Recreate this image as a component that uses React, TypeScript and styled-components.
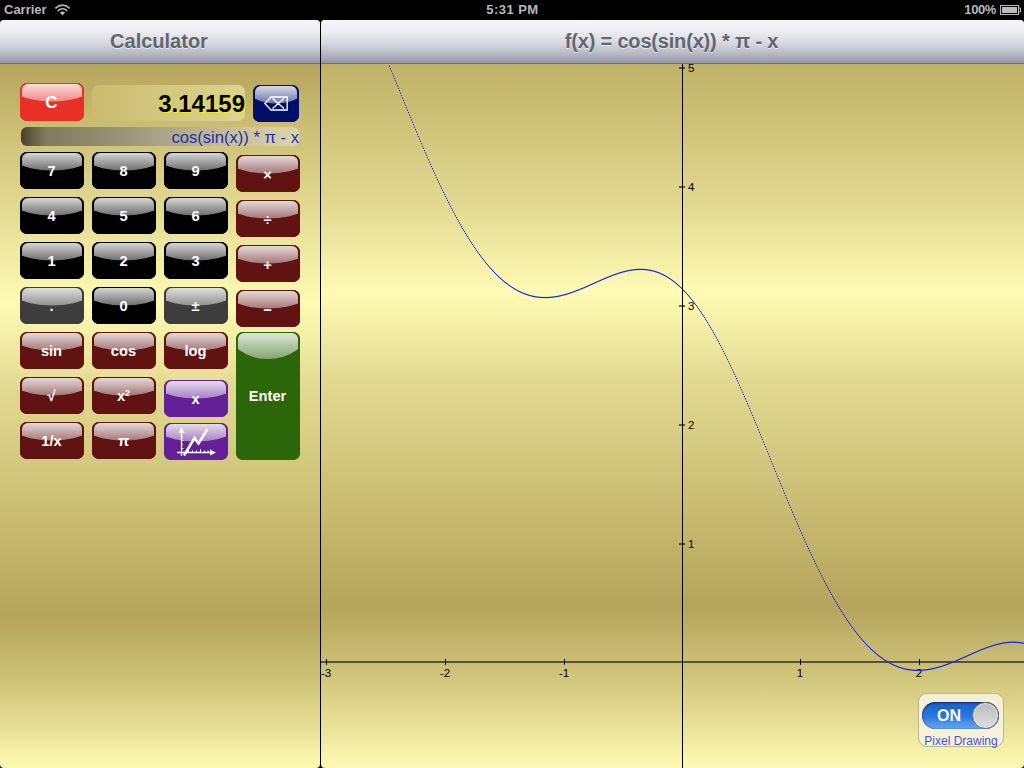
import React from 'react';
import styled, { createGlobalStyle, css } from 'styled-components';

const GlobalStyle = createGlobalStyle`
  * { box-sizing: border-box; }
  body {
    margin: 0;
    background: #000;
    font-family: 'Liberation Sans', Arial, Helvetica, sans-serif;
    overflow: hidden;
  }
`;

const Screen = styled.div`
  width: 1024px;
  height: 768px;
  display: flex;
  flex-direction: column;
  background: #000;
`;

const StatusBar = styled.header`
  height: 20px;
  display: grid;
  grid-template-columns: 1fr auto 1fr;
  align-items: center;
  padding: 0 3px 0 4px;
  color: #b8b8b8;
  font-size: 13px;
  font-weight: bold;
  line-height: 20px;
`;

const StatusGroup = styled.div<{ $end?: boolean }>`
  display: flex;
  align-items: center;
  justify-content: ${p => (p.$end ? 'flex-end' : 'flex-start')};
  gap: ${p => (p.$end ? '4px' : '7px')};
  letter-spacing: ${p => (p.$end ? '-0.4px' : '0')};
  svg { display: block; }
`;

const Clock = styled.div`
  font-size: 13px;
  letter-spacing: 0.45px;
`;

const SplitView = styled.main`
  flex: 1;
  display: flex;
  gap: 1px;
`;

const Pane = styled.section<{ $width: number; $backdrop: string }>`
  width: ${p => p.$width}px;
  height: 748px;
  display: flex;
  flex-direction: column;
  border-radius: 4px;
  overflow: hidden;
  background: ${p => p.$backdrop};
`;

const TitleBar = styled.h1<{ $spacing?: string }>`
  margin: 0;
  height: 44px;
  flex: none;
  border-bottom: 1px solid #6b7088;
  background: linear-gradient(#f6f6fa 0%, #eeeff2 25%, #d6d7de 55%, #b4b6c2 80%, #9a9cad 98%);
  color: #60676e;
  font-size: 20px;
  font-weight: bold;
  line-height: 43px;
  text-align: center;
  text-shadow: 0 1px 0 rgba(255, 255, 255, 0.55);
  letter-spacing: ${p => p.$spacing || '0'};
  padding-right: 2px;
`;

const CalculatorBody = styled.div`
  padding: 19px 20px 0;
  display: flex;
  flex-direction: column;
`;

const DisplayRow = styled.div`
  display: flex;
  gap: 8px;
  align-items: flex-start;
`;

const Display = styled.output`
  width: 153px;
  height: 36px;
  margin-top: 2px;
  border-radius: 7px;
  background: linear-gradient(90deg, #cabb6f, #ddd38f);
  color: #000;
  font-size: 24px;
  font-weight: bold;
  line-height: 38px;
  text-align: right;
  text-shadow: 1px 1px 0 #f2e800;
`;

const Expression = styled.div`
  width: 278px;
  height: 19px;
  margin: 5px 0 6px 1px;
  border-radius: 6px;
  background: linear-gradient(90deg, #45412b 0, #645f46 12px, #827c5e 26px, #8f896a 70px, #aaa488 140px, #c8c19d 215px, #dbd4ac 278px);
  color: #1f2fae;
  font-size: 16.6px;
  line-height: 21px;
  text-align: right;
  white-space: nowrap;
`;

const tones = {
  black: '#000000',
  gray: '#3d3d3d',
  maroon: '#601310',
  violet: '#642098',
  green: '#2b6608',
  red: '#e83026',
  navy: '#020f69',
};
type Tone = keyof typeof tones;

const Key = styled.button<{ $tone: Tone; $top?: number; $width?: number; $height?: number; $tall?: boolean; $drop?: number }>`
  position: relative;
  width: ${p => p.$width || 64}px;
  height: ${p => p.$height || 37}px;
  flex: none;
  margin: ${p => p.$top || 0}px 0 0;
  padding: ${p => p.$drop ?? 1}px 1px 0 0;
  display: flex;
  align-items: center;
  justify-content: center;
  border: 0;
  border-radius: 7px;
  background: ${p => tones[p.$tone]};
  box-shadow: 0 0 0.5px ${p => tones[p.$tone]};
  color: #fff;
  font: bold 14.7px/18px 'Liberation Sans', Arial, sans-serif;
  ${p => p.$tone === 'red' && css`font-size: 17px;`}

  &::before {
    content: '';
    position: absolute;
    left: 2px;
    right: 2px;
    top: 1px;
    height: ${p => (p.$tall ? 26 : 18)}px;
    border-radius: 6px 6px 0 0;
    background: linear-gradient(rgba(255, 255, 255, 0.84), rgba(255, 255, 255, 0.42));
    clip-path: ${p => (p.$tall ? 'ellipse(67% 29.5px at 50% -3.5px)' : 'ellipse(93% 30px at 50% -12.5px)')};
  }
`;

const KeyFace = styled.span`
  position: relative;
  display: block;
  sup { font-size: 9px; line-height: 0; vertical-align: 5px; }
  svg { display: block; }
`;

const Keypad = styled.div`
  display: flex;
  gap: 8px;
`;

const KeyColumn = styled.div`
  display: flex;
  flex-direction: column;
`;

const PlotArea = styled.div`
  position: relative;
  flex: 1;
  svg { display: block; }
`;

const OptionPanel = styled.div`
  position: absolute;
  left: 597px;
  top: 629px;
  width: 86px;
  height: 54px;
  border: 1px solid #b9b598;
  border-radius: 9px;
  background: rgba(246, 243, 222, 0.9);
  padding: 8px 3px 0;
`;

const Toggle = styled.div`
  width: 77px;
  height: 27px;
  border-radius: 14px;
  background: linear-gradient(#1a5cc2 0%, #1e6fdc 30%, #2878e0 55%, #4a90e6 75%, #62a4ee 100%);
  box-shadow: inset 0 1px 2px rgba(0, 20, 80, 0.7), inset 0 0 1px rgba(0, 20, 80, 0.8);
  display: flex;
  align-items: center;
  justify-content: space-between;
  padding-left: 15px;
  color: #fff;
  font-size: 16px;
  font-weight: bold;
  line-height: 29px;
  text-shadow: 0 -1px 0 rgba(0, 0, 0, 0.3);
`;

const Knob = styled.span`
  width: 27px;
  height: 27px;
  border: 1px solid #6f7378;
  border-radius: 50%;
  background: linear-gradient(#bcbcbc, #dedede);
  box-shadow: inset 0 0 0 1px #e6e6e6;
`;

const OptionLabel = styled.div`
  margin-top: 5px;
  color: #4a50dc;
  font-size: 12px;
  line-height: 14px;
  text-align: center;
  white-space: nowrap;
`;

const WifiIcon = () => (
  <svg width="17" height="12" viewBox="0 0 16 12" fill="none" stroke="#b8b8b8" strokeWidth="1.6">
    <path d="M0.8 4.4 Q8 -2 15.2 4.4" />
    <path d="M3.3 6.8 Q8 2.7 12.7 6.8" />
    <path d="M5.4 8.6 Q8 6.4 10.6 8.6 L8 11.4 Z" fill="#b8b8b8" stroke="none" />
  </svg>
);

const BatteryIcon = () => (
  <svg width="21" height="10" viewBox="0 0 21 10">
    <rect x="0.5" y="0.5" width="18" height="9" fill="none" stroke="#bcbcbc" />
    <rect x="2" y="2" width="15" height="6" fill="#bcbcbc" />
    <path d="M19 3 H20.5 V7 H19" fill="none" stroke="#bcbcbc" />
  </svg>
);

const EraseIcon = () => (
  <svg width="24" height="15" viewBox="0 0 24 15" fill="none" stroke="#fff" strokeWidth="1.3">
    <path d="M0.8 7.5 L7 1 H23.2 V14 H7 Z M8.5 2.5 L20 12.5 M20 2.5 L8.5 12.5" />
  </svg>
);

const GraphIcon = () => (
  <svg width="40" height="30" viewBox="0 0 40 30" fill="none" stroke="#fff">
    <path d="M5.5 4 V29 M1 25.5 H35" strokeWidth="1.3" />
    <path d="M5.5 0 L8.5 6 H2.5 Z M40 25.5 L34 22.5 V28.5 Z" fill="#fff" stroke="none" />
    <path d="M7 9.5 H5 M7.5 13.5 H5 M7 17.5 H5 M7.5 21.5 H5 M12.5 23.5 V25 M16.5 23.5 V25 M20.5 23.5 V25 M24.5 22 V25 M28.5 23.5 V25 M32 23.5 V25" strokeWidth="1" />
    <path d="M8 28.5 L18.5 11 L22.5 16.5 L31.5 2" strokeWidth="2.5" />
  </svg>
);

const UNIT = 118.67;
const ORIGIN = { x: 361.5, y: 598 };
const WIDTH = 703;
const HEIGHT = 704;
const f = (x: number) => Math.cos(Math.sin(x)) * Math.PI - x;

const xTicks = [
  { n: -3, x: 5 },
  { n: -2, x: 124 },
  { n: -1, x: 243 },
  { n: 1, x: 479 },
  { n: 2, x: 598 },
];

const yTicks = [
  { n: 1, y: 480 },
  { n: 2, y: 361 },
  { n: 3, y: 242 },
  { n: 4, y: 123 },
  { n: 5, y: 4 },
];

const Plot = () => {
  const points: { x: number; y: number }[] = [];
  for (let px = 0; px < WIDTH; px++) {
    const y = ORIGIN.y - f((px + 0.5 - ORIGIN.x) / UNIT) * UNIT;
    if (y > 0 && y < HEIGHT) points.push({ x: px, y: y - 0.6 });
  }
  return (
    <svg width={WIDTH} height={HEIGHT} fontSize="11.5" fill="#000">
      <rect x="361" y="0" width="1" height={HEIGHT} />
      <rect x="0" y="597" width={WIDTH} height="2" opacity="0.57" />
      {xTicks.map(({ n, x }) => (
        <g key={n}>
          <rect x={x} y="595" width="1" height="6" />
          <text x={x} y="613" textAnchor="middle">{n}</text>
        </g>
      ))}
      {yTicks.map(({ n, y }) => (
        <g key={n}>
          <rect x="358" y={y - 1} width="6" height="2" opacity="0.57" />
          <text x="367" y={y + 4}>{n}</text>
        </g>
      ))}
      <g fill="#0a28f0">
        {points.map(p => <rect key={p.x} x={p.x} y={p.y.toFixed(2)} width="1" height="1.25" />)}
      </g>
    </svg>
  );
};

type KeySpec = { label: React.ReactNode; tone: Tone; top?: number; height?: number; tall?: boolean; drop?: number };

const columns: KeySpec[][] = [
  [
    { label: '7', tone: 'black' },
    { label: '4', tone: 'black', top: 8 },
    { label: '1', tone: 'black', top: 8 },
    { label: '.', tone: 'gray', top: 8 },
    { label: 'sin', tone: 'maroon', top: 8 },
    { label: '√', tone: 'maroon', top: 8 },
    { label: '1/x', tone: 'maroon', top: 8 },
  ],
  [
    { label: '8', tone: 'black' },
    { label: '5', tone: 'black', top: 8 },
    { label: '2', tone: 'black', top: 8 },
    { label: '0', tone: 'black', top: 8 },
    { label: 'cos', tone: 'maroon', top: 8 },
    { label: <>x<sup>2</sup></>, tone: 'maroon', top: 8 },
    { label: 'π', tone: 'maroon', top: 8 },
  ],
  [
    { label: '9', tone: 'black' },
    { label: '6', tone: 'black', top: 8 },
    { label: '3', tone: 'black', top: 8 },
    { label: '±', tone: 'gray', top: 8 },
    { label: 'log', tone: 'maroon', top: 8 },
    { label: 'x', tone: 'violet', top: 11 },
    { label: <GraphIcon />, tone: 'violet', top: 6, drop: 0 },
  ],
  [
    { label: '×', tone: 'maroon', top: 3, drop: 3 },
    { label: '÷', tone: 'maroon', top: 8, drop: 3 },
    { label: '+', tone: 'maroon', top: 8, drop: 3 },
    { label: '−', tone: 'maroon', top: 8, drop: 3 },
    { label: 'Enter', tone: 'green', top: 5, height: 128, tall: true, drop: 0 },
  ],
];

const leftBackdrop = 'linear-gradient(#b5a45c 0, #b5a45c 44px, #c9bc72 100px, #e0d78f 180px, #fffbb4 283px, #e2d990 370px, #c6b96f 510px, #b5a45c 597px, #cfc47a 665px, #e6dd94 705px, #fffbb4 748px)';
const rightBackdrop = 'linear-gradient(#bfb168 0, #bfb168 44px, #cfc47a 110px, #e2d990 185px, #fffbb4 273px, #e2d990 360px, #c6b96f 500px, #b5a45c 586px, #cfc47a 655px, #e6dd94 700px, #fffbb4 748px)';

export default function App() {
  return (
    <>
      <GlobalStyle />
      <Screen>
        <StatusBar>
          <StatusGroup><span>Carrier</span><WifiIcon /></StatusGroup>
          <Clock>5:31 PM</Clock>
          <StatusGroup $end><span>100%</span><BatteryIcon /></StatusGroup>
        </StatusBar>
        <SplitView>
          <Pane $width={320} $backdrop={leftBackdrop}>
            <TitleBar>Calculator</TitleBar>
            <CalculatorBody>
              <DisplayRow>
                <Key $tone="red" $height={38}><KeyFace>C</KeyFace></Key>
                <Display>3.14159</Display>
                <Key $tone="navy" $width={46} $top={2} $drop={0}><KeyFace><EraseIcon /></KeyFace></Key>
              </DisplayRow>
              <Expression>cos(sin(x)) * π - x</Expression>
              <Keypad>
                {columns.map((keys, c) => (
                  <KeyColumn key={c}>
                    {keys.map((k, i) => (
                      <Key key={i} $tone={k.tone} $top={k.top} $height={k.height} $tall={k.tall} $drop={k.drop}>
                        <KeyFace>{k.label}</KeyFace>
                      </Key>
                    ))}
                  </KeyColumn>
                ))}
              </Keypad>
            </CalculatorBody>
          </Pane>
          <Pane $width={703} $backdrop={rightBackdrop}>
            <TitleBar $spacing="-0.18px">f(x) = cos(sin(x)) * π - x</TitleBar>
            <PlotArea>
              <Plot />
              <OptionPanel>
                <Toggle>ON<Knob /></Toggle>
                <OptionLabel>Pixel Drawing</OptionLabel>
              </OptionPanel>
            </PlotArea>
          </Pane>
        </SplitView>
      </Screen>
    </>
  );
}
